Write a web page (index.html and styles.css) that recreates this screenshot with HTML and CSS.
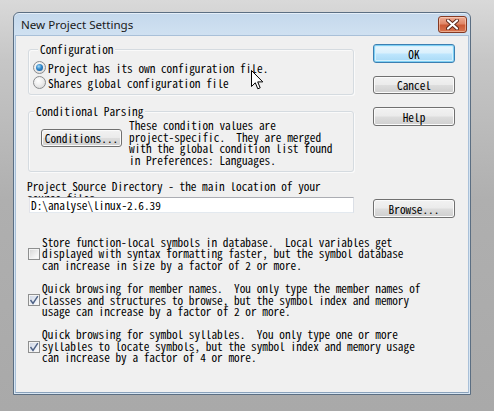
FILE: index.html
```html
<!DOCTYPE html>
<html>
<head>
<meta charset="utf-8">
<title>New Project Settings</title>
<link rel="stylesheet" href="styles.css">
</head>
<body>
<div class="window">
  <div class="titlebar">
    <span class="title">New Project Settings</span>
    <span class="close">
      <svg width="13" height="11" viewBox="0 0 13 11"><path d="M2 1.5 L11 9.5 M11 1.5 L2 9.5" stroke="#5a2418" stroke-width="4" stroke-linecap="round"/><path d="M2 1.5 L11 9.5 M11 1.5 L2 9.5" stroke="#ffffff" stroke-width="2.2" stroke-linecap="round"/></svg>
    </span>
  </div>
  <div class="client">
    <div class="top">
      <div class="leftcol">
        <div class="group g1">
          <div class="glabel">Configuration</div>
          <div class="radio-row first"><span class="radio checked"></span><span class="rtext">Project has its own configuration file.</span></div>
          <div class="radio-row"><span class="radio"></span><span class="rtext">Shares global configuration file</span></div>
        </div>
        <div class="group g2">
          <div class="glabel">Conditional Parsing</div>
          <div class="cond-row">
            <div class="btn cond-btn">Conditions...</div>
            <div class="cond-text">These condition values are
project-specific.  They are merged
with the global condition list found
in Preferences: Languages.</div>
          </div>
        </div>
        <div class="dir-label">Project Source Directory - the main location of your
source files.</div>
        <div class="dir-input">D:\analyse\linux-2.6.39</div>
      </div>
      <div class="rightcol">
        <div class="btn default">OK</div>
        <div class="btn cancel">Cancel</div>
        <div class="btn help">Help</div>
        <div class="btn browse">Browse...</div>
      </div>
    </div>
    <div class="options">
      <div class="opt">
        <span class="check"></span>
        <div class="opt-text">Store function-local symbols in database.  Local variables get
displayed with syntax formatting faster, but the symbol database
can increase in size by a factor of 2 or more.</div>
      </div>
      <div class="opt">
        <span class="check checked"><svg width="10" height="10" viewBox="0 0 10 10"><path d="M1.5 5 L4 8.5 L8.8 1.2" fill="none" stroke="#4d6185" stroke-width="1.4"/></svg></span>
        <div class="opt-text">Quick browsing for member names.  You only type the member names of
classes and structures to browse, but the symbol index and memory
usage can increase by a factor of 2 or more.</div>
      </div>
      <div class="opt">
        <span class="check checked"><svg width="10" height="10" viewBox="0 0 10 10"><path d="M1.5 5 L4 8.5 L8.8 1.2" fill="none" stroke="#4d6185" stroke-width="1.4"/></svg></span>
        <div class="opt-text">Quick browsing for symbol syllables.  You only type one or more
syllables to locate symbols, but the symbol index and memory usage
can increase by a factor of 4 or more.</div>
      </div>
    </div>
  </div>
</div>
<svg class="cursor" width="13" height="20" viewBox="0 0 13 20"><path d="M0.5 0.5 L0.5 16.5 L4.3 12.8 L6.8 18.8 L9.2 17.8 L6.7 11.9 L11.8 11.9 Z" fill="#ffffff" stroke="#000000" stroke-width="1" stroke-linejoin="miter"/></svg>
</body>
</html>
```
FILE: styles.css
```css
html, body {
  margin: 0;
  padding: 0;
}

body {
  width: 494px;
  height: 411px;
  overflow: hidden;
  box-sizing: border-box;
  padding: 12px 0 0 13px;
  position: relative;
  background: linear-gradient(180deg, #d9d9d9 0px, #c6c6c6 60px, #afafaf 200px, #a9a9a9 411px);
  font-family: "Noto Sans Mono CJK SC", "Liberation Mono", monospace;
  font-size: 11.3px;
  color: #000;
}

.window {
  width: 458px;
  height: 383px;
  box-sizing: border-box;
  border: 1px solid #5b6e82;
  border-radius: 6px 6px 0 0;
  background: linear-gradient(180deg, #c4d8ec 0px, #d0e1f1 22px, #d8e6f3 100%);
  display: flex;
  flex-direction: column;
  box-shadow: inset 0 1px 0 #e4eef8;
}

.titlebar {
  height: 22px;
  flex: none;
  display: flex;
  align-items: center;
  justify-content: space-between;
  padding: 0 3px 0 7px;
}

.title {
  font-family: "Noto Sans", "Open Sans", sans-serif;
  font-size: 11.6px;
  color: #1a1a1a;
  margin-top: 1px;
}

.close {
  width: 29px;
  height: 17px;
  box-sizing: border-box;
  border: 1px solid #843a24;
  border-radius: 3px;
  background: linear-gradient(180deg, #eeac95 0%, #e08868 45%, #cc5a36 55%, #d8754f 100%);
  box-shadow: inset 0 0 0 1px rgba(255, 225, 205, 0.5);
  display: flex;
  align-items: center;
  justify-content: center;
}

.client {
  flex: 1;
  margin: 0 1px 1px 1px;
  border: 1px solid #a9c0d8;
  border-bottom-color: #8aa2bb;
  background: #f0f0f0;
  padding: 8px 0 0 11px;
}

.top {
  display: flex;
  align-items: flex-start;
}

.leftcol {
  width: 327px;
  padding-top: 5px;
}

.group {
  width: 326px;
  box-sizing: border-box;
  margin-left: 1px;
  border: 1px solid #d5dbe0;
  border-radius: 3px;
  box-shadow: inset 1px 1px 0 #fafafa, 1px 1px 0 #fafafa;
}

.glabel {
  height: 12px;
  line-height: 12px;
  margin: -7px 0 0 5px;
  padding: 0 2px;
  background: #f0f0f0;
  width: max-content;
}

.g1 {
  padding: 0 0 4px 4px;
}

.radio-row {
  height: 15px;
  display: flex;
  align-items: center;
  gap: 2px;
}

.radio-row.first {
  margin-top: 5px;
}

.rtext {
  white-space: pre;
}

.radio {
  width: 13px;
  height: 13px;
  box-sizing: border-box;
  border-radius: 50%;
  border: 1px solid #8a8c8e;
  background: radial-gradient(circle at 40% 35%, #ffffff 0%, #f0f0f0 40%, #d2d2d2 100%);
  position: relative;
  flex: none;
}

.radio.checked::after {
  content: "";
  position: absolute;
  left: 2px;
  top: 2px;
  width: 7px;
  height: 7px;
  border-radius: 50%;
  background: radial-gradient(circle at 40% 35%, #a9dcf7 0%, #2f86c9 45%, #114f8d 100%);
}

.g2 {
  margin-top: 16px;
  padding: 0 0 5px 0;
}

.cond-row {
  margin-top: 3px;
  display: flex;
  align-items: flex-start;
}

.cond-text {
  white-space: pre;
  line-height: 11.6px;
  margin-left: 7px;
}

.btn {
  box-sizing: border-box;
  border: 1px solid #707070;
  border-radius: 3px;
  background: linear-gradient(180deg, #f2f2f2 0%, #ebebeb 48%, #dddddd 52%, #cfcfcf 100%);
  box-shadow: inset 0 0 0 1px #fbfbfb;
  display: flex;
  align-items: center;
  justify-content: center;
  white-space: pre;
  flex: none;
}

.cond-btn {
  width: 81px;
  height: 18px;
  margin: 9px 0 0 12px;
}

.dir-label {
  margin-top: 9px;
  height: 16px;
  overflow: hidden;
  white-space: pre;
  line-height: 11.6px;
}

.dir-input {
  margin-left: 2px;
  width: 325px;
  height: 16px;
  box-sizing: border-box;
  border: 1px solid #abadb3;
  border-left-color: #e2e3ea;
  border-right-color: #dbdfe6;
  border-bottom-color: #e3e9ef;
  background: #ffffff;
  line-height: 14px;
  padding-left: 1px;
  white-space: pre;
}

.rightcol {
  margin-left: 19px;
  display: flex;
  flex-direction: column;
}

.rightcol .btn {
  width: 82px;
  height: 19px;
}

.btn.default {
  border-color: #3c7fb1;
  background: linear-gradient(180deg, #eaf6fd 0%, #d9f0fc 48%, #bee6fd 52%, #a7d9f5 100%);
  box-shadow: inset 0 0 0 1px #7fd0f4, inset 0 0 0 2px #d6f0fc;
}

.rightcol .cancel {
  margin-top: 13px;
  height: 18px;
}

.rightcol .help {
  margin-top: 13px;
}

.rightcol .browse {
  margin-top: 73px;
}

.options {
  margin: 19px 0 0 1px;
  display: flex;
  flex-direction: column;
  gap: 12px;
}

.opt {
  display: flex;
  align-items: center;
  gap: 2px;
}

.opt-text {
  white-space: pre;
  line-height: 11.4px;
}

.check {
  width: 12px;
  height: 12px;
  box-sizing: border-box;
  border: 1px solid #8e8f8f;
  background: linear-gradient(135deg, #d4d4d4 0%, #f4f4f4 70%, #ffffff 100%);
  box-shadow: inset 0 0 0 1px #f4f4f4;
  display: flex;
  align-items: center;
  justify-content: center;
  flex: none;
}

.check.checked {
  background: linear-gradient(135deg, #cbd3e2 0%, #eef1f7 70%, #ffffff 100%);
}

.cursor {
  position: absolute;
  left: 251px;
  top: 70px;
}
```
